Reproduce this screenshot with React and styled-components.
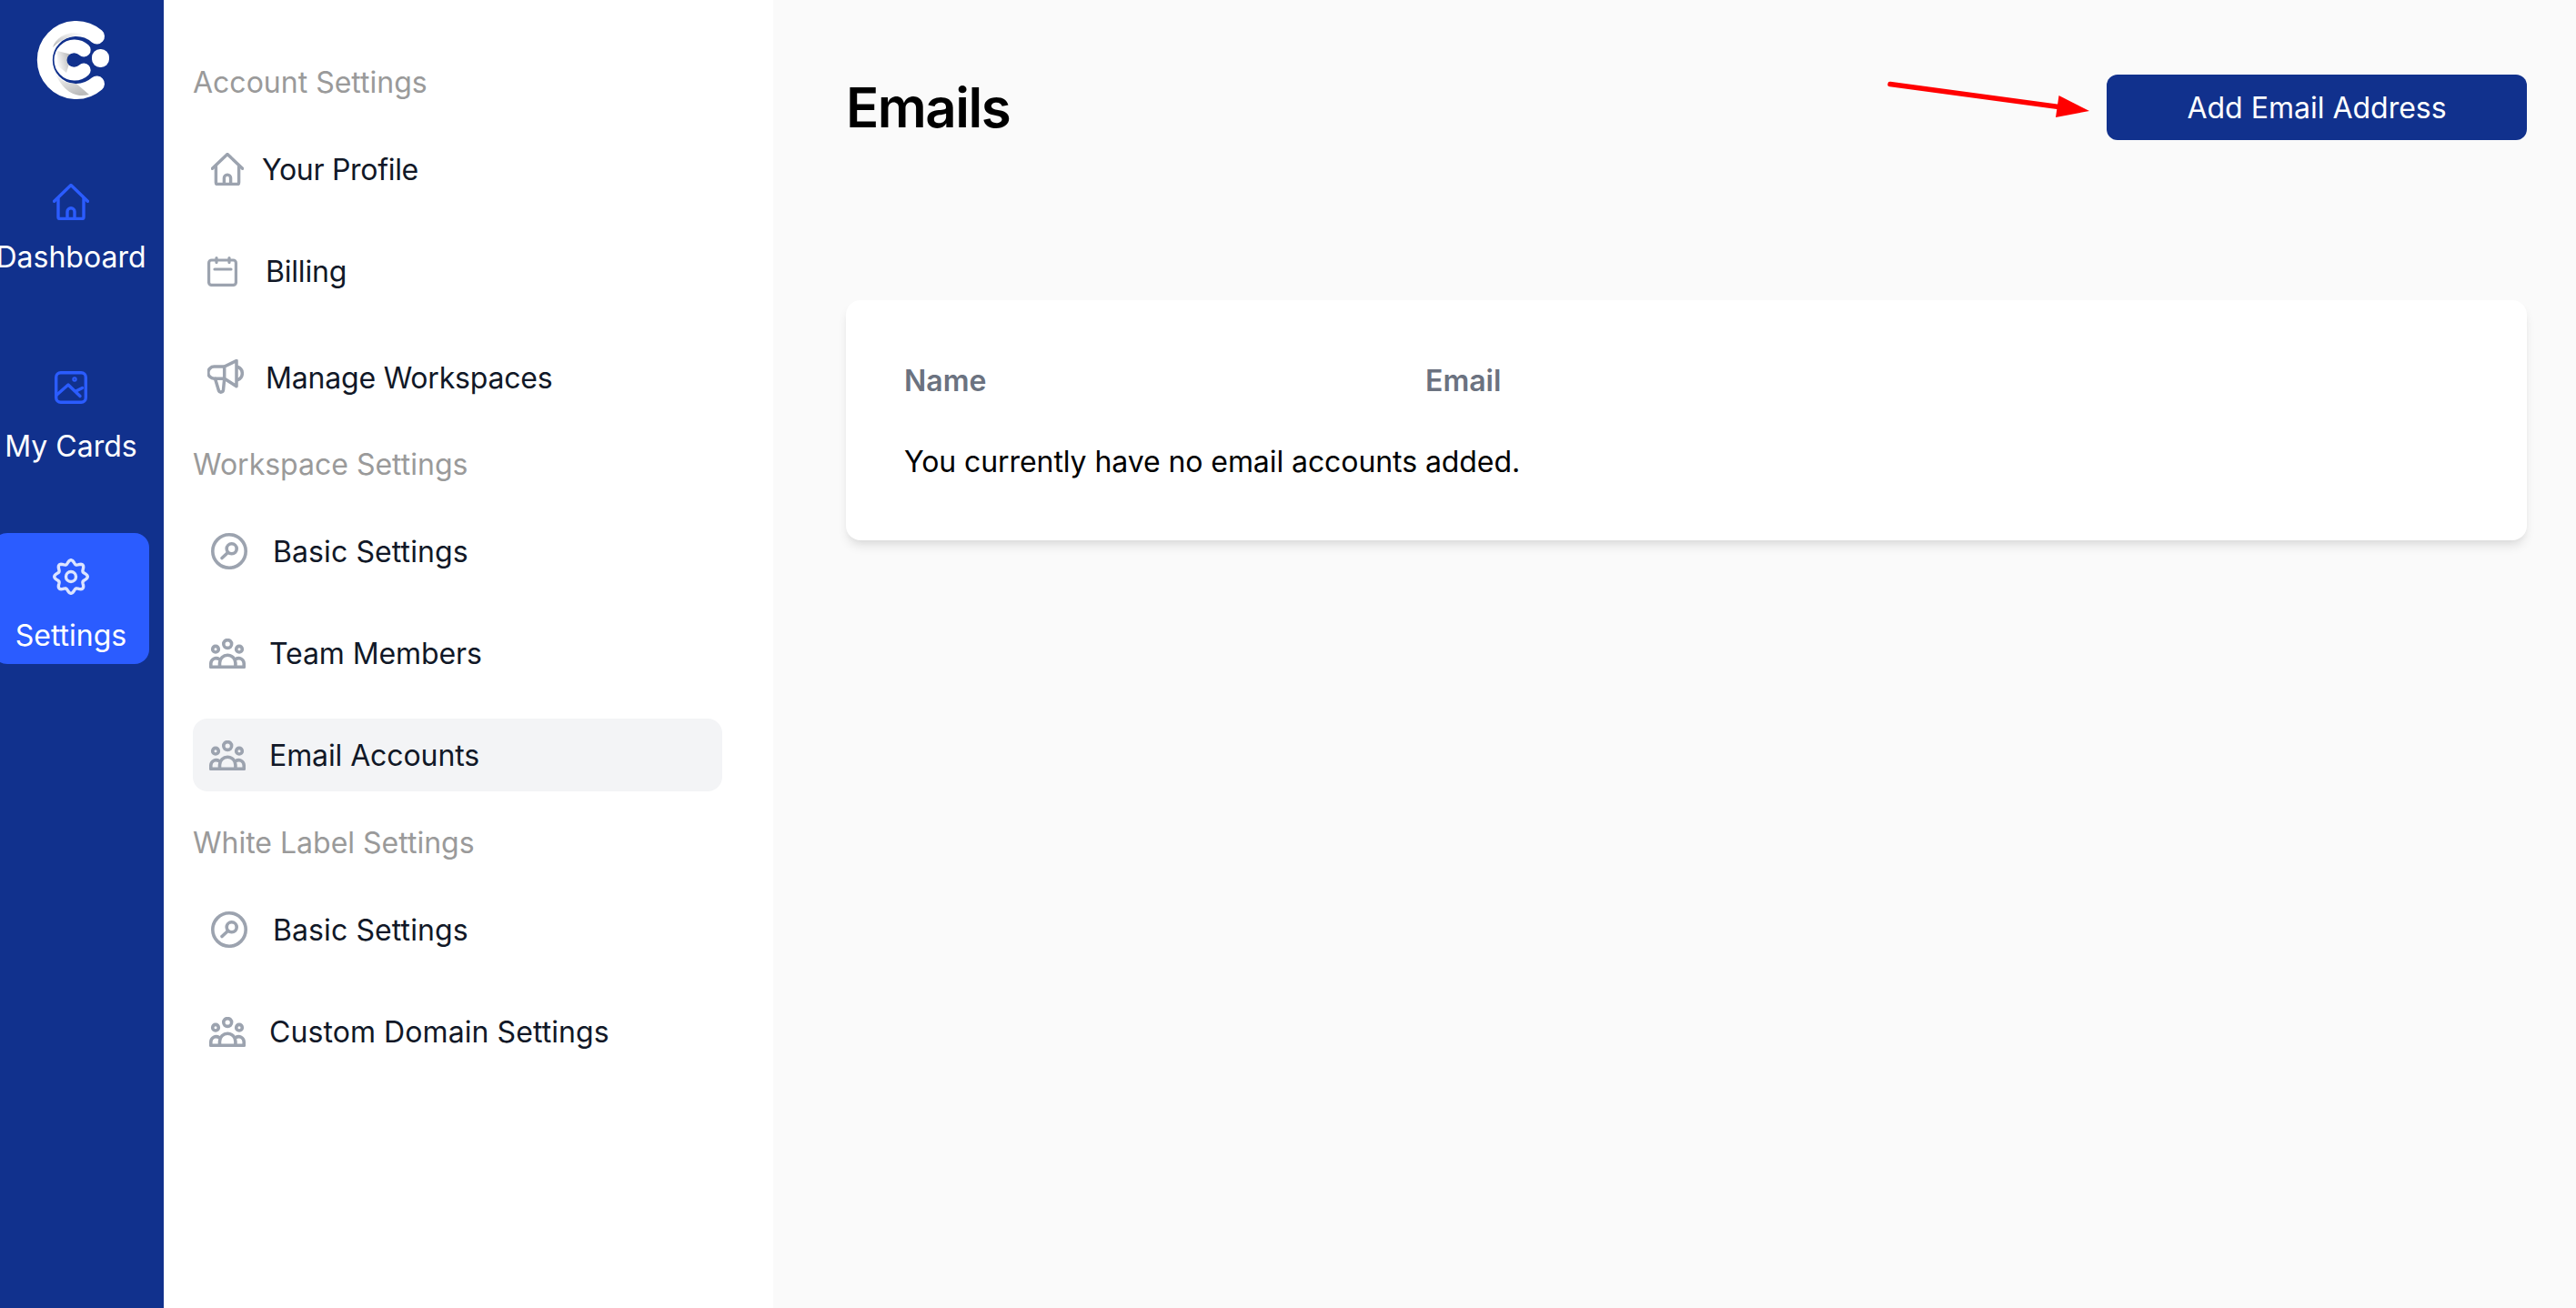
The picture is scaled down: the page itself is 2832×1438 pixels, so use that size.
import React from "react";
import styled, { createGlobalStyle } from "styled-components";

const NAVY = "#11318d";
const BLUE = "#2b5cff";
const GREY = "#9ca3af";

const GlobalStyle = createGlobalStyle`
  html, body {
    margin: 0;
    padding: 0;
    background: #fafafa;
  }
  * {
    box-sizing: border-box;
  }
  body {
    font-family: "Inter", "Liberation Sans", sans-serif;
  }
`;

// Icons
const Line = styled.svg`
  display: block;
  flex: none;
  fill: none;
  stroke: ${(p) => p.$color || GREY};
  stroke-linecap: round;
  stroke-linejoin: round;
`;

const HomeIcon = ({ size, color, weight = 1.9 }) => (
  <Line $color={color} width={size} height={size} viewBox="2 2 20 20" strokeWidth={weight}>
    <path d="M2.800 11.600 12 2.800l9.200 8.800" />
    <path d="M5 10v10.200a1 1 0 0 0 1 1h12a1 1 0 0 0 1-1V10" />
    <path d="M10 21v-3.600a2 2 0 0 1 4 0V21" />
  </Line>
);

const ImageIcon = ({ color }) => (
  <Line $color={color} width={36} height={36} viewBox="0 0 36 36" strokeWidth={3.4}>
    <rect x="1.700" y="1.700" width="32.600" height="32.600" rx="5" />
    <path d="M2.500 26 15 15l13 12.500" />
    <path d="m23.500 22 7-3.500" />
    <circle cx="22" cy="9" r="1" />
  </Line>
);

// scalloped outline, 8 lobes
const gearPath = () => {
  const pts = [];
  for (let i = 0; i < 96; i++) {
    const a = (i / 96) * Math.PI * 2;
    const r = 16.2 + 2.1 * Math.cos(a * 8);
    pts.push(`${(20 + r * Math.sin(a)).toFixed(2)} ${(20 - r * Math.cos(a)).toFixed(2)}`);
  }
  return `M${pts.join("L")}Z`;
};

const GearIcon = ({ color }) => (
  <Line $color={color} width={40} height={40} viewBox="0 0 40 40" strokeWidth={3.4}>
    <path d={gearPath()} />
    <circle cx="20" cy="20" r="5.500" />
  </Line>
);

const CalendarIcon = () => (
  <Line width={33} height={33} viewBox="0 0 33 33" strokeWidth={3.2}>
    <rect x="1.600" y="4" width="29.800" height="27.400" rx="3" />
    <path d="M10 1.600v5M24 1.600v5M8 14h18" />
  </Line>
);

const MegaphoneIcon = () => (
  <Line width={40} height={40} viewBox="8 12 40 40" strokeWidth={3.5}>
    <path d="M26.700 20 40 13.500v28.200l-13.300-8.400z" />
    <path d="M26.700 20H15.500a6.650 6.650 0 0 0 0 13.300h11.200" />
    <path d="m16.500 33.300 4 13.200a2.600 2.600 0 0 0 5-.8l1.200-12.400" />
    <path d="M41.500 20.500a7.500 7.500 0 0 1 0 14" />
  </Line>
);

const SearchCircleIcon = () => (
  <Line width={40} height={40} viewBox="0 0 40 40" strokeWidth={3.6}>
    <circle cx="20" cy="20" r="18.200" />
    <circle cx="22.700" cy="17.300" r="5.500" />
    <path d="m18.500 21.500-6.500 6" />
  </Line>
);

const TeamIcon = () => (
  <Line width={40} height={33} viewBox="0 0 40 33" strokeWidth={3.6}>
    <circle cx="20.200" cy="6" r="4.400" />
    <circle cx="7" cy="11.700" r="3.300" />
    <circle cx="33" cy="11.700" r="3.300" />
    <path d="M1.800 31.200h36.400" />
    <path d="M1.800 31.200v-4a5.800 5.800 0 0 1 9-4.600" />
    <path d="M38.200 31.200v-4a5.800 5.800 0 0 0-9-4.600" />
    <path d="M11.500 31.200V27a8.700 8.700 0 0 1 17.400 0v4.200" />
  </Line>
);

const Logo = () => (
  <LogoMark width={100} height={100} viewBox="0 0 100 100">
    <defs>
      <linearGradient id="shadeTop" x1="0" y1="1" x2="0.8" y2="0">
        <stop offset="0" stopColor="#b4b4b4" />
        <stop offset="1" stopColor="#ffffff" />
      </linearGradient>
      <linearGradient id="shadeLow" x1="0.6" y1="1" x2="0.1" y2="0">
        <stop offset="0" stopColor="#bcbcbc" />
        <stop offset="1" stopColor="#ffffff" />
      </linearGradient>
      <linearGradient id="shadeCore" x1="1" y1="0.3" x2="0" y2="0.7">
        <stop offset="0" stopColor="#b0b0b0" />
        <stop offset="1" stopColor="#ffffff" />
      </linearGradient>
    </defs>
    <path
      d="M76.500 26A34.500 34.500 0 1 0 76.500 78"
      fill="none"
      stroke="#fff"
      strokeWidth="17"
      strokeLinecap="round"
    />
    <path d="M28 38C32 25 50 17 68 25 56 23 40 26 28 38Z" fill="url(#shadeTop)" />
    <path d="M29 62C34 74 42 78 54 78L68 90C50 95 36 82 29 62Z" fill="url(#shadeLow)" />
    <path d="M62.200 41A15 15 0 1 0 62.200 63" fill="none" stroke="#fff" strokeWidth="15" strokeLinecap="round" />
    <path d="M33 42 49 46 43 66 33 58Z" fill="url(#shadeCore)" />
    <circle cx="51" cy="52" r="7.500" fill={NAVY} />
    <rect x="71" y="40" width="19" height="20" rx="9" fill="#fff" />
  </LogoMark>
);

const navItems = [
  { label: "Dashboard", icon: <HomeIcon size={40} color={BLUE} weight={1.7} />, nudge: 4 },
  { label: "My Cards", icon: <ImageIcon color={BLUE} />, nudge: 0 },
  { label: "Settings", icon: <GearIcon color="#dbe4ff" />, nudge: 0, active: true },
];

const sections = [
  {
    title: "Account Settings",
    before: 0,
    rows: [
      { label: "Your Profile", icon: <HomeIcon size={36} />, pad: 20, gap: 20, track: -0.3 },
      { label: "Billing", icon: <CalendarIcon />, pad: 16, gap: 31, track: -0.2 },
      { label: "Manage Workspaces", icon: <MegaphoneIcon />, pad: 16, gap: 24, track: -0.2, tall: true },
    ],
  },
  {
    title: "Workspace Settings",
    before: 26,
    rows: [
      { label: "Basic Settings", icon: <SearchCircleIcon />, pad: 20, gap: 28, track: 0.1 },
      { label: "Team Members", icon: <TeamIcon />, pad: 18, gap: 26, track: -0.1 },
      { label: "Email Accounts", icon: <TeamIcon />, pad: 18, gap: 26, track: -0.1, active: true },
    ],
  },
  {
    title: "White Label Settings",
    before: 29,
    rows: [
      { label: "Basic Settings", icon: <SearchCircleIcon />, pad: 20, gap: 28, track: 0.1 },
      { label: "Custom Domain Settings", icon: <TeamIcon />, pad: 18, gap: 26, track: 0.08 },
    ],
  },
];

const App = () => {
  return (
    <>
      <GlobalStyle />
      <Page>
        <Rail>
          <LogoSlot>
            <Logo />
          </LogoSlot>
          <RailNav>
            {navItems.map((item) => (
              <RailItem key={item.label} $active={item.active}>
                <RailIcon $nudge={item.nudge}>{item.icon}</RailIcon>
                <RailLabel>{item.label}</RailLabel>
              </RailItem>
            ))}
          </RailNav>
        </Rail>

        <SettingsNav>
          {sections.map((section) => (
            <Section key={section.title} $before={section.before}>
              <SectionTitle>{section.title}</SectionTitle>
              <RowList>
                {section.rows.map((row) => (
                  <Row
                    key={row.label}
                    $active={row.active}
                    $pad={row.pad}
                    $gap={row.gap}
                    $tall={row.tall}
                    $track={row.track}
                  >
                    {row.icon}
                    <RowLabel>{row.label}</RowLabel>
                  </Row>
                ))}
              </RowList>
            </Section>
          ))}
        </SettingsNav>

        <Main>
          <Header>
            <Title>Emails</Title>
            <AddButton>Add Email Address</AddButton>
          </Header>
          <Arrow width={228} height={44} viewBox="0 0 228 44">
            <path d="M6 4.500 195 30" stroke="#ff0000" strokeWidth="5.500" strokeLinecap="round" />
            <path d="M191.500 17 225 34 188 41Z" fill="#ff0000" />
          </Arrow>
          <Card>
            <TableHead>
              <span>Name</span>
              <span>Email</span>
            </TableHead>
            <EmptyText>You currently have no email accounts added.</EmptyText>
          </Card>
        </Main>
      </Page>
    </>
  );
};

const Page = styled.div`
  display: flex;
  width: 100%;
  min-height: 100vh;
  overflow: hidden;
`;

const Rail = styled.aside`
  flex: none;
  width: 180px;
  background: ${NAVY};
  padding-top: 14px;
  overflow: hidden;
`;

const LogoSlot = styled.div`
  padding-left: 30px;
`;

const LogoMark = styled.svg`
  display: block;
`;

const RailNav = styled.nav`
  display: flex;
  flex-direction: column;
  gap: 64px;
  margin-top: 56px;
`;

const RailItem = styled.a`
  display: flex;
  flex-direction: column;
  align-items: center;
  width: 172px;
  height: 144px;
  margin-left: -8px;
  padding-top: 24px;
  border-radius: 16px;
  background: ${(p) => (p.$active ? BLUE : "transparent")};
  color: #fff;
`;

const RailIcon = styled.div`
  display: flex;
  align-items: center;
  justify-content: center;
  height: 48px;
  margin-top: ${(p) => p.$nudge}px;
  margin-bottom: ${(p) => -p.$nudge}px;
`;

const RailLabel = styled.span`
  margin-top: 21px;
  font-size: 32px;
  line-height: 40px;
  white-space: nowrap;
`;

const SettingsNav = styled.nav`
  flex: none;
  width: 670px;
  background: #fff;
  padding: 63px 56px 0 32px;
`;

const Section = styled.section`
  display: flex;
  flex-direction: column;
  gap: 27px;
  margin-top: ${(p) => p.$before}px;
`;

const SectionTitle = styled.div`
  font-size: 32px;
  line-height: 56px;
  color: #9a9a9a;
`;

const RowList = styled.div`
  display: flex;
  flex-direction: column;
  gap: 32px;
`;

const Row = styled.a`
  display: flex;
  align-items: center;
  gap: ${(p) => p.$gap}px;
  height: ${(p) => (p.$tall ? 84 : 80)}px;
  margin-top: ${(p) => (p.$tall ? 3 : 0)}px;
  padding-left: ${(p) => p.$pad}px;
  border-radius: 16px;
  background: ${(p) => (p.$active ? "#f3f4f6" : "transparent")};
  color: #111827;
  font-size: 32px;
  line-height: 40px;
  letter-spacing: ${(p) => p.$track}px;
  white-space: nowrap;
`;

const RowLabel = styled.span`
  padding-top: 2px;
`;

const Main = styled.main`
  position: relative;
  flex: 1;
  min-width: 0;
  background: #fafafa;
  padding: 82px 54px 0 80px;
`;

const Header = styled.header`
  display: flex;
  align-items: center;
  justify-content: space-between;
  height: 72px;
`;

const Title = styled.h1`
  margin: 0;
  font-size: 60px;
  line-height: 72px;
  font-weight: 600;
  letter-spacing: -1.5px;
  color: #000;
`;

const AddButton = styled.button`
  width: 462px;
  height: 72px;
  border: 0;
  border-radius: 12px;
  background: ${NAVY};
  color: #fff;
  font-family: inherit;
  font-size: 32px;
`;

const Arrow = styled.svg`
  position: absolute;
  left: 1222px;
  top: 88px;
`;

const Card = styled.section`
  margin-top: 176px;
  padding: 69px 64px 66px;
  border-radius: 16px;
  background: #fff;
  box-shadow: 0 8px 12px -2px rgba(0, 0, 0, 0.1), 0 4px 8px -4px rgba(0, 0, 0, 0.06);
`;

const TableHead = styled.div`
  display: grid;
  grid-template-columns: 573px 1fr;
  font-size: 32px;
  line-height: 40px;
  font-weight: 600;
  color: #6b7280;
`;

const EmptyText = styled.p`
  margin: 49px 0 0;
  font-size: 32px;
  line-height: 40px;
  letter-spacing: -0.08px;
  color: #000;
`;

export default App;
